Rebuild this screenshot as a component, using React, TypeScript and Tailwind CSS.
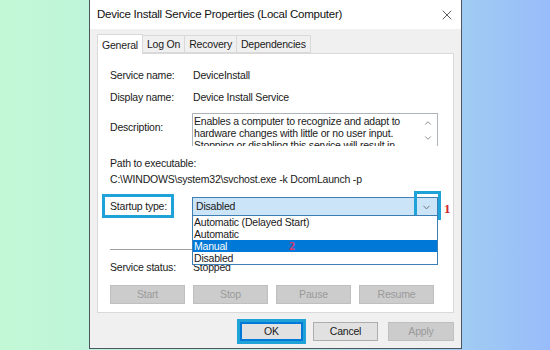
import { X, ChevronDown, ChevronUp } from "lucide-react";

const font = { fontFamily: '"Liberation Sans", Arial, sans-serif' };

const actions = ["Start", "Stop", "Pause", "Resume"];
const options = ["Automatic (Delayed Start)", "Automatic", "Manual", "Disabled"];

function Row({ label, value, className = "" }: { label: string; value: string; className?: string }) {
  return (
    <div className={`flex items-center h-[14px] ${className}`}>
      <span className="w-[83px] shrink-0">{label}</span>
      <span>{value}</span>
    </div>
  );
}

export default function App() {
  return (
    <div
      className="w-[550px] h-[350px] overflow-hidden bg-gradient-to-r from-[#c3f8d6] via-[#b5ecdf] to-[#98bcfa] pl-[89px] text-[10.5px] tracking-[-0.2px] text-[#1a1a1a]"
      style={font}
    >
      <div className="w-[373px] h-[349px] bg-[#f0f0f0] border-x border-b border-[#4d5560] flex flex-col">
        {/* Title bar */}
        <div className="h-[29px] bg-white flex items-center justify-between pl-[7px] pr-[6px]">
          <span className="text-[11.5px] tracking-[-0.25px] text-[#111]">Device Install Service Properties (Local Computer)</span>
          <X size={16} strokeWidth={1.2} className="text-[#333]" />
        </div>

        <div className="px-[7px] pt-[6px]">
          {/* Tabs */}
          <div className="flex items-end h-[18px]">
            <div className="h-[20px] -mb-px px-[4px] pt-[2px] bg-white border border-b-0 border-[#d9d9d9] flex items-center relative z-10">
              General
            </div>
            {["Log On", "Recovery", "Dependencies"].map((t) => (
              <div key={t} className="h-[18px] px-[4px] pt-[2px] border border-l-0 border-[#d9d9d9] flex items-center bg-[#f0f0f0]">
                {t}
              </div>
            ))}
          </div>

          {/* Panel */}
          <div className="h-[260px] bg-white border border-[#d9d9d9] pl-[12px] pr-[14px] pt-[15px] relative">
            <Row label="Service name:" value="DeviceInstall" />
            <Row label="Display name:" value="Device Install Service" className="mt-[8px]" />

            <div className="flex mt-[8px]">
              <span className="w-[82px] shrink-0 pt-[7px]">Description:</span>
              <div className="w-[246px] h-[33px] border border-[#aeb4bb] border-b-0 flex overflow-hidden">
                <div className="flex-1 pl-[1px] pt-[1px] leading-[12px]">
                  Enables a computer to recognize and adapt to hardware changes with little or no user input. Stopping or disabling this service will result in system instability.
                </div>
                <div className="w-[18px] flex flex-col items-center pt-[4px] text-[#555]">
                  <ChevronUp size={10} strokeWidth={1.6} />
                  <ChevronDown size={10} strokeWidth={1.6} className="mt-[5px]" />
                </div>
              </div>
            </div>

            <div className="mt-[11px] h-[14px] flex items-center">Path to executable:</div>
            <div className="mt-[2px] h-[14px] flex items-center">C:\WINDOWS\system32\svchost.exe -k DcomLaunch -p</div>

            {/* Startup type */}
            <div className="flex items-center mt-[10px] h-[20px]">
              <span className="w-[82px] shrink-0">Startup type:</span>
              <div className="w-[246px] h-[20px] bg-[#cce4f7] border border-[#3d7fb5] flex items-center justify-between pl-[3px] pr-[5px]">
                <span>Disabled</span>
                <ChevronDown size={11} strokeWidth={1.5} className="text-[#444]" />
              </div>
            </div>

            <div className="mt-[32px] w-[83px] border-t border-[#a0a0a0]" />

            <Row label="Service status:" value="Stopped" className="mt-[11px]" />

            <div className="flex gap-[8px] mt-[10px]">
              {actions.map((a) => (
                <div
                  key={a}
                  className="w-[75px] h-[19px] bg-[#cccccc] border border-[#bfbfbf] text-[#9a9a9a] flex items-center justify-center"
                >
                  {a}
                </div>
              ))}
            </div>

            {/* Highlight around label */}
            <div className="absolute left-[4px] top-[140px] w-[72px] h-[24px] border-[3px] border-[#1fa2d8]" />
            {/* Highlight around arrow */}
            <div className="absolute left-[316px] top-[137px] w-[27px] h-[29px] border-[3px] border-[#1fa2d8]" />
            <span
              className="absolute left-[346px] top-[145px] text-[13px] font-bold text-[#d3232b]"
              style={{ fontFamily: '"Liberation Serif", serif' }}
            >
              1
            </span>

            {/* Open dropdown list */}
            <div className="absolute left-[94px] top-[161px] w-[246px] bg-white border border-[#3d7fb5] flex flex-col">
              {options.map((o) => (
                <div
                  key={o}
                  className={`h-[12px] leading-[12px] pl-[1px] relative ${
                    o === "Manual" ? "bg-[#0078d7] text-white" : ""
                  }`}
                >
                  {o}
                  {o === "Manual" && (
                    <span
                      className="absolute left-[96px] top-[0px] text-[12px] font-bold text-[#e2336b]"
                      style={{ fontFamily: '"Liberation Serif", serif' }}
                    >
                      2
                    </span>
                  )}
                </div>
              ))}
            </div>
          </div>
        </div>

        {/* Bottom buttons */}
        <div className="flex justify-end gap-[10px] pr-[7px] mt-[9px]">
          <div className="relative w-[63px] h-[19px] bg-[#e1e1e1] border-2 border-[#0078d7] flex items-center justify-center">
            OK
            <div className="absolute -inset-[5px] border-[3px] border-[#1fa2d8]" />
          </div>
          <div className="w-[65px] h-[19px] bg-[#e1e1e1] border border-[#adadad] flex items-center justify-center">
            Cancel
          </div>
          <div className="w-[66px] h-[19px] bg-[#cccccc] border border-[#bfbfbf] text-[#9a9a9a] flex items-center justify-center">
            Apply
          </div>
        </div>
      </div>
    </div>
  );
}
